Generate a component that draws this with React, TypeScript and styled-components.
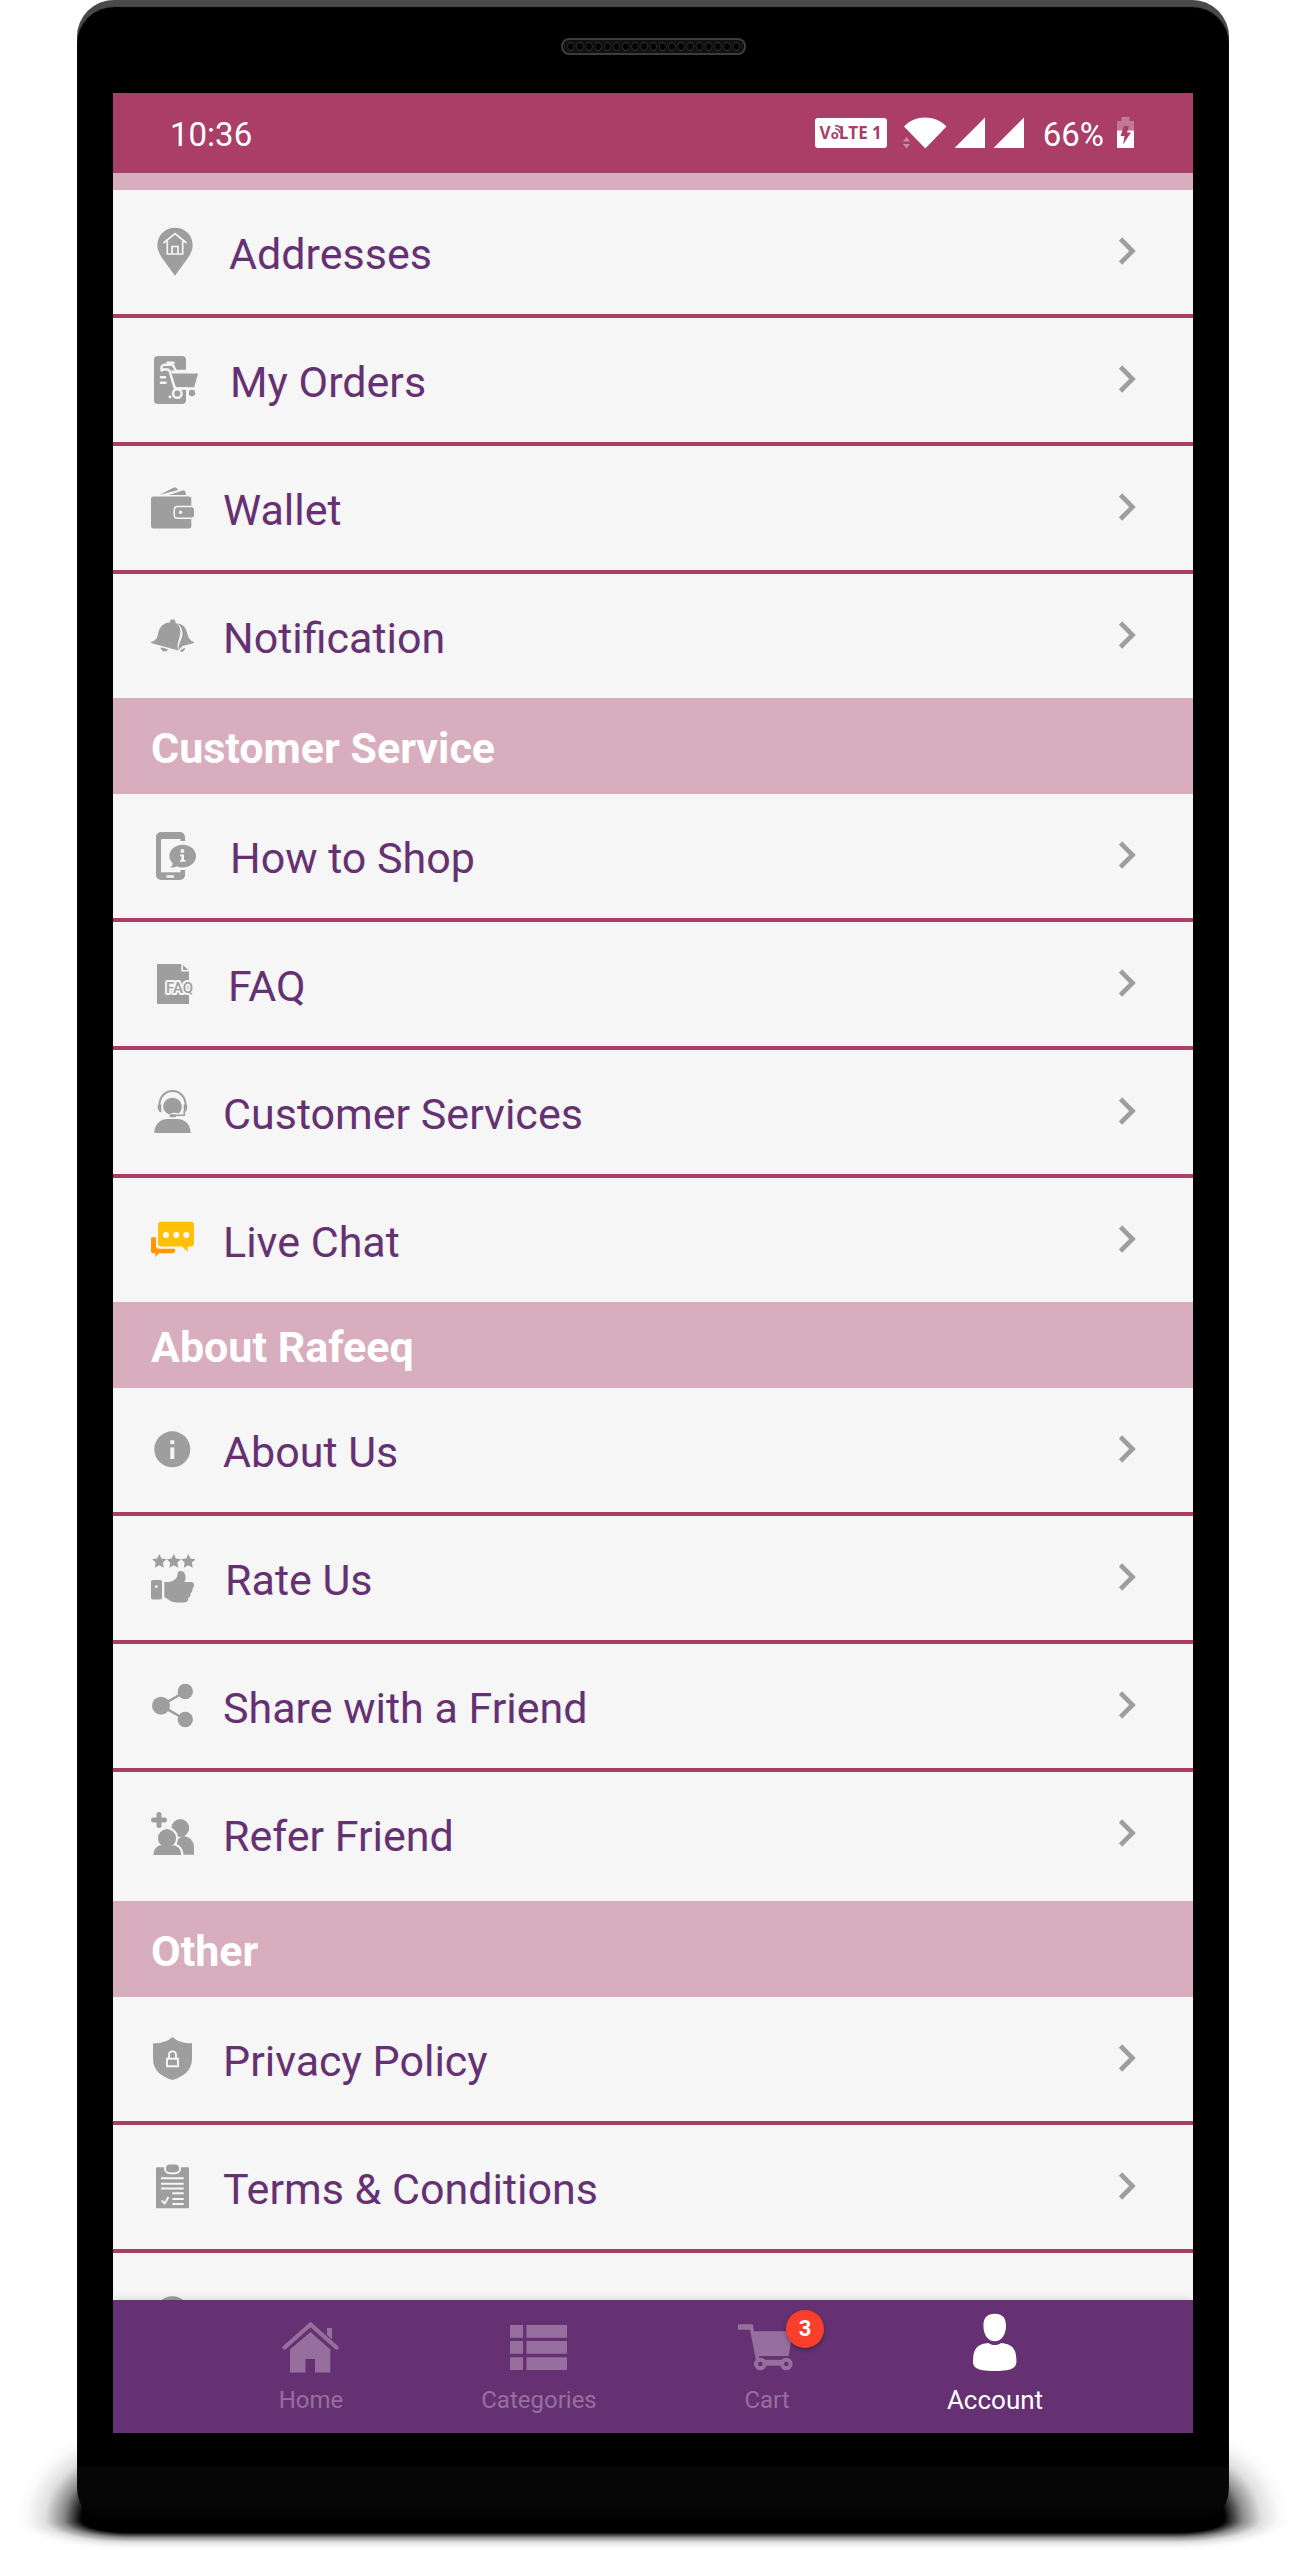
import React from "react";
import styled, { createGlobalStyle, css } from "styled-components";

const color = {
  berry: "#aa3e67",
  blush: "#d8adbd",
  surface: "#f6f6f6",
  purple: "#653172",
  icon: "#9e9e9e",
  muted: "#976f9f",
  alert: "#f93e2c",
};

const GlobalStyle = createGlobalStyle`
  *, *::before, *::after { box-sizing: border-box; }
  body {
    margin: 0;
    background: #fff;
    font-family: Roboto, "Noto Sans", sans-serif;
  }
`;

const Stage = styled.div`
  position: relative;
  height: 100vh;
  padding: 0 76px 25px 77px;
  overflow: hidden;
`;

const shade = "#000 42%, rgba(0, 0, 0, 0.45) 58%, rgba(0, 0, 0, 0.12) 74%, rgba(0, 0, 0, 0.02) 90%, transparent 100%";

const GroundShadow = styled.div`
  position: absolute;
  left: 15px;
  right: 14px;
  bottom: 0;
  height: 125px;
  background-repeat: no-repeat;
  background-image: radial-gradient(115px 95px at 100% 100%, ${shade}),
    radial-gradient(115px 95px at 0 100%, ${shade}),
    radial-gradient(115px 30px at 100% 0, ${shade}),
    radial-gradient(115px 30px at 0 0, ${shade}),
    linear-gradient(${shade});
  background-position: left top, right top, left bottom, right bottom, center bottom;
  background-size: 115px 95px, 115px 95px, 115px 30px, 115px 30px, calc(100% - 230px) 30px;
`;

const Phone = styled.div`
  position: relative;
  display: flex;
  flex-direction: column;
  height: 100%;
  padding: 0 36px;
  border-radius: 37px;
  background: linear-gradient(#000, #000) top / 100% calc(100% - 58px) no-repeat,
    linear-gradient(#070707, #060606 50%, #000) bottom / 100% 58px no-repeat;
  box-shadow: inset 0 7px 1px #4a4a4a;
`;

const TopBezel = styled.div`
  flex: none;
  display: flex;
  justify-content: center;
  height: 93px;
  padding-top: 38px;
`;

const Speaker = styled.div`
  width: 185px;
  height: 17px;
  padding: 0 3px;
  border: 2px solid #3c3c3c;
  border-radius: 8px;
  background-color: #111;
  background-image: radial-gradient(3px 4px at center, #000 80%, #3a3a3a 100%, transparent 120%);
  background-origin: content-box;
  background-size: 9px 13px;
  background-repeat: round no-repeat;
`;

const BottomBezel = styled.div`
  flex: none;
  height: 92px;
`;

const Screen = styled.div`
  flex: 1;
  min-height: 0;
  display: flex;
  flex-direction: column;
  background: ${color.surface};
`;

const StatusBar = styled.header`
  flex: none;
  display: flex;
  align-items: center;
  justify-content: space-between;
  height: 80px;
  padding: 0 59px 0 57px;
  background: ${color.berry};
  color: #fff;
`;

const StatusText = styled.span`
  padding-top: 4px;
  font-size: 33px;
  line-height: 40px;
`;

const StatusGroup = styled.div`
  display: flex;
  align-items: center;
  gap: 7px;

  svg {
    display: block;
    flex: none;
  }
`;

const Percent = styled(StatusText)`
  margin: 0 6px 0 11px;
`;

const NetworkBadge = styled.span`
  position: relative;
  display: flex;
  align-items: baseline;
  justify-content: center;
  width: 72px;
  height: 30px;
  margin-right: 9px;
  border-radius: 3px;
  background: #fff;
  color: ${color.berry};
  font: 700 17px/30px "Open Sans", sans-serif;
  white-space: pre;

  small {
    font-size: 13px;
  }

  svg {
    position: absolute;
    left: 20px;
    top: 7px;
  }
`;

const Content = styled.main`
  flex: 1;
  min-height: 0;
  overflow-y: auto;
  scrollbar-width: none;
`;

const Strip = styled.div`
  height: 17px;
  background: ${color.blush};
`;

const SectionTitle = styled.h2<{ $compact?: boolean }>`
  display: flex;
  align-items: center;
  height: ${(p) => (p.$compact ? 86 : 96)}px;
  margin: 0;
  padding: 3px 38px 0;
  background: ${color.blush};
  color: #fff;
  font-size: 43px;
  line-height: 50px;
  font-weight: 700;
`;

const List = styled.ul<{ $spaced?: boolean }>`
  margin: 0;
  padding: 0 0 ${(p) => (p.$spaced ? 5 : 0)}px;
  list-style: none;
`;

const Item = styled.li`
  & + & {
    border-top: 4px solid ${color.berry};
  }
`;

const RowLink = styled.a`
  display: flex;
  align-items: center;
  height: 124px;
  padding: 0 57px 0 38px;
  color: ${color.purple};
  text-decoration: none;

  svg {
    display: block;
    flex: none;
  }
`;

const RowLabel = styled.span`
  flex: 1;
  padding: 3px 0 0 29px;
  font-size: 43px;
  line-height: 50px;
`;

const TabBar = styled.nav`
  position: relative;
  flex: none;
  display: grid;
  grid-template-columns: repeat(4, 1fr);
  height: 133px;
  padding: 13px 84px 0;
  background: ${color.purple};
  box-shadow: 0 -1px 8px rgba(0, 0, 0, 0.12);
`;

const Tab = styled.a<{ $active?: boolean }>`
  display: flex;
  flex-direction: column;
  align-items: center;
  gap: 13px;
  color: ${color.muted};
  font-size: 24px;
  line-height: 28px;
  text-decoration: none;
  ${(p) =>
    p.$active &&
    css`
      color: #fff;
      font-size: 26px;
    `}
`;

const TabIcon = styled.span`
  position: relative;
  height: 60px;

  svg {
    display: block;
  }
`;

const Badge = styled.span`
  position: absolute;
  left: 48px;
  top: -3px;
  width: 38px;
  height: 38px;
  border-radius: 50%;
  background: ${color.alert};
  box-shadow: 0 2px 4px rgba(0, 0, 0, 0.35);
  color: #fff;
  font-size: 22px;
  line-height: 38px;
  font-weight: 700;
  text-align: center;
`;

const g = color.icon;
const w = color.surface;

const Glyph = ({ width = 43, children }: { width?: number; children: React.ReactNode }) => (
  <svg width={width} height="64" viewBox={`0 0 ${width} 64`} fill={g} aria-hidden="true">
    {children}
  </svg>
);

const AddressIcon = () => (
  <Glyph width={49}>
    <path d="M24 7.700C14 7.700 6.400 15.300 6.400 25c0 4.500 1.600 8 4 12L24 55.700 37.600 37c2.400-4 4-7.500 4-12C41.600 15.300 34 7.700 24 7.700z" />
    <path
      d="M12.500 23 24 13.500 35.500 23M16.300 21v13h15.400V21M21 34v-7.500h6V34"
      fill="none"
      stroke={w}
      strokeWidth="1.700"
    />
  </Glyph>
);

const OrdersIcon = () => (
  <Glyph width={50}>
    <rect x="3" y="8" width="32" height="48" rx="4" />
    <path d="M20 22.500h17v19H25z" fill={w} />
    <path d="M20.500 25.500H47l-3.700 13.800H25z" />
    <path d="M27 41.700h8v6h-8z" />
    <path
      d="M10.700 22.500c-1-3 0-5.500 3-5.800h7c3 0 2 6.300 5.500 6.300H35M10.500 21.500h6c1.500 0 2 1 2.400 2.500L23 38.500c.4 1.500 1 2 2.500 2H36"
      fill="none"
      stroke={w}
      strokeWidth="2.400"
      strokeLinecap="round"
    />
    <path d="M16.500 14.800h6M10 29.300h4M10 34.700h4.500" stroke={w} strokeWidth="2.600" strokeLinecap="round" />
    <circle cx="26.300" cy="45.500" r="4.300" stroke={w} strokeWidth="2.400" />
    <circle cx="19" cy="49" r="1.400" fill={w} />
    <circle cx="41" cy="45" r="3.200" />
  </Glyph>
);

const WalletIcon = () => (
  <Glyph>
    <path d="m8.300 19 14-7.300c2-1 3-.7 4.700 2.300z" />
    <path d="m18 19 13.500-4.400c2.500-.7 3.300.6 3.500 4.400z" />
    <rect y="20.500" width="40.300" height="32" rx="2.500" />
    <path d="M44 29.700H26.500a4 4 0 0 0-4 4v5.200a4 4 0 0 0 4 4H44z" fill={w} />
    <rect x="24" y="31.200" width="19" height="10.300" rx="2.500" />
    <circle cx="29.500" cy="36.300" r="1.700" fill={w} />
  </Glyph>
);

const BellIcon = () => (
  <Glyph>
    <path d="M18.800 18.500c.2-4.200 5.600-4.200 5.800.2 3.500 1.800 5 5.300 4.700 10.300-.3 5-3 9-2.800 13 0 1.500.4 3 1 4.500L0 39v-1c4.800-1.200 6.200-4 7-8 1.200-6.500 4.500-11 11.800-11.500z" />
    <path d="M26 19.500c5.500.2 8.500 3.500 10 9 1.200 5 3 8.500 7 9.500v1l-11.500 3-3.700 4c-1-5.500 2.700-9.500 3.500-14.500.6-5-.8-9.500-5.300-12z" />
    <path d="M9.500 43.500c2.500 0 5 .8 7.500 2-1.500 3-6.700 2.500-7.500-2zM29 46.500l5-3c.2 2-1.500 4.500-3.500 4.500z" />
  </Glyph>
);

const HowToIcon = () => (
  <Glyph width={50}>
    <rect x="5" y="8" width="29" height="48" rx="5" />
    <path d="M10 15h19.500v33.300H10z" fill={w} />
    <path d="M29 17h6v29h-6z" fill={w} />
    <path d="M16.300 52.500H22" stroke={w} strokeWidth="2.400" strokeLinecap="round" />
    <path d="M31.700 20.700c7.500 0 13.300 5 13.300 11.400s-5.800 11.400-13.300 11.400c-2.300 0-4.300-.5-6-1.300-2 1.300-4 1.500-6.400 1 1.300-1 2.400-2.300 2.600-3.700-2.200-2-3.500-4.500-3.500-7.400 0-6.400 5.800-11.400 13.300-11.400z" />
    <circle cx="31.400" cy="27" r="1.900" fill={w} />
    <path d="M29 30.500h4V36h1.500v1.800H29V36h1.300v-3.700H29z" fill={w} />
  </Glyph>
);

const FaqIcon = () => (
  <Glyph width={48}>
    <path d="M7 12h23.300v7.500H38V52H7a1 1 0 0 1-1-1V13a1 1 0 0 1 1-1z" />
    <path d="M32 13v5h5.300z" />
    <text
      x="15"
      y="41"
      fontFamily="Roboto, sans-serif"
      fontSize="15"
      fontWeight="500"
      stroke={w}
      strokeWidth="4"
      strokeLinejoin="round"
      paintOrder="stroke"
    >
      FAQ
    </text>
  </Glyph>
);

const SupportIcon = () => (
  <Glyph>
    <path d="M8.300 26c0-20 26.400-20 26.400 0" fill="none" stroke={g} strokeWidth="2" />
    <path d="M7.300 24.500h3v8c-4-.5-4-7.500-3-8zM35.700 24.500h-3v8c4-.5 4-7.500 3-8z" />
    <path d="M33.300 31v4.300H20" fill="none" stroke={g} strokeWidth="1.600" />
    <path d="M21.500 17.800c5 0 9.300 3.700 9.300 8.700 0 3-1.300 5.500-3.300 7-2-1-7-1-9 1-3.500-1.300-6.300-4-6.300-8 0-5 4.300-8.700 9.300-8.700z" />
    <rect x="18.500" y="34.500" width="6.500" height="2.700" rx="1.300" />
    <path d="M3.300 53c0-8 5.500-14 13.500-14h9.400c8 0 13.500 6 13.500 14z" />
  </Glyph>
);

const ChatIcon = () => (
  <Glyph>
    <path
      d="M0 30.700c0-1 .5-1.400 1.500-1.400H5v8.500c0 2 1 3 3 3h16v1.700c0 1.700-1 2.700-2.700 2.700H8L4.300 49v-3.800H2c-1.300 0-2-.7-2-2z"
      fill="#ff9800"
    />
    <path
      d="M10 13.800h30c2 0 3 1 3 3v18.800c0 2-1 3-3 3h-3.300v5.200L31 38.600H10c-2 0-3-1-3-3V16.800c0-2 1-3 3-3z"
      fill="#ffc107"
    />
    <g fill={w}>
      <circle cx="15" cy="27" r="3" />
      <circle cx="25.300" cy="27" r="3" />
      <circle cx="35.300" cy="27" r="3" />
    </g>
  </Glyph>
);

const InfoIcon = () => (
  <Glyph>
    <circle cx="21.300" cy="31.300" r="18" />
    <path d="M19.300 22.300h4V26h-4zM19.300 29.500h4V41h-4z" fill={w} />
  </Glyph>
);

const star = "M0-7.600 2.100-2.900 7.200-2.300 3.600 1.100 4.500 6.200 0 3.700-4.500 6.200-3.600 1.100-7.200-2.300-2.100-2.900z";

const RateIcon = () => (
  <Glyph width={45}>
    <path d={star} transform="translate(8.300 15.500)" />
    <path d={star} transform="translate(22.800 15.500)" />
    <path d={star} transform="translate(37.300 15.500)" />
    <path d="M2 34h7c1.300 0 2 .7 2 2v15.500c0 1.300-.7 2-2 2H2c-1.300 0-2-.7-2-2V36c0-1.300.7-2 2-2z" />
    <circle cx="5.300" cy="40.700" r="1.400" fill={w} />
    <path d="M13.300 36H18c6-1.500 8.500-4 8.500-8 0-2.500 1.500-3.300 3.500-3 5 .5 5.500 7 3.500 11H40c3.800 0 4 5 1.500 6.500.3 2.500-.6 4-2 4.700.5 2.500-.8 4-2.300 4.800.3 3-1.500 4.500-4.200 4.500h-7.500c-5.500 0-8.500-3.500-12.200-5.500z" />
  </Glyph>
);

const ShareIcon = () => (
  <Glyph>
    <path d="M34.300 17.500 10 31.700l24.300 13.800" fill="none" stroke={g} strokeWidth="2.500" />
    <circle cx="10" cy="31.700" r="9" />
    <circle cx="34.300" cy="17.500" r="7.700" />
    <circle cx="34.300" cy="45.500" r="7.700" />
  </Glyph>
);

const ReferIcon = () => (
  <Glyph>
    <path d="M8 12.500v11M2.500 18h11" stroke={g} strokeWidth="5" strokeLinecap="round" />
    <circle cx="29.300" cy="26" r="8.900" />
    <path d="M18 52.800V42l14-8c6 0 11 5 11 11v7.800z" />
    <g stroke={w} strokeWidth="2.200">
      <circle cx="16" cy="36.200" r="10" />
      <path d="M1 54c0-7.500 4-12 10-12 3 1.500 7 1.500 10 0 6.500.5 10.500 5 10.500 12z" />
    </g>
    <circle cx="16" cy="36.200" r="8.900" />
    <path d="M0 53h33v3H0z" fill={w} />
  </Glyph>
);

const ShieldIcon = () => (
  <Glyph>
    <path d="M21.500 10c5 4.500 11 6.300 19.500 6.300V32c0 11.500-9 18-19.500 21C11 50 2 43.500 2 32V16.300c8.500 0 14.500-1.800 19.500-6.300z" />
    <path d="M16 31.800h11v7.400H16zM18 31.500V28c0-4.800 7-4.800 7 0v3.500" fill="none" stroke={w} strokeWidth="1.900" />
  </Glyph>
);

const TermsIcon = () => (
  <Glyph>
    <rect x="5" y="12.300" width="33" height="41" rx="1" />
    <rect x="14" y="8.500" width="15" height="9.700" rx="4.800" stroke={w} strokeWidth="2" />
    <path
      d="M10 23.300h22.700M10 28.700h22.700M10 33.500h22.700M21.300 38.300h11.400M21.300 44h11.400M21.300 49h11.400M10.700 45.500l3 3 3.800-6.500"
      fill="none"
      stroke={w}
      strokeWidth="2"
    />
  </Glyph>
);

const Chevron = () => (
  <svg width="18" height="30" viewBox="0 0 18 30" fill="none" aria-hidden="true">
    <path d="M2.500 2 14.500 14 2.500 26" stroke={g} strokeWidth="4.600" />
  </svg>
);

const TabGlyph = ({ children }: { children: React.ReactNode }) => (
  <svg width="58" height="60" viewBox="0 0 58 60" fill="currentColor" aria-hidden="true">
    {children}
  </svg>
);

const HomeTab = () => (
  <TabGlyph>
    <path d="m2.500 34.500 26-23 26 23" fill="none" stroke="currentColor" strokeWidth="4.200" strokeLinecap="round" />
    <path d="M45 15h5v11.500L45 22z" />
    <path d="m28.500 19 19.800 17.500V59.500H33V46h-9.500v13.500H8V36.500z" />
  </TabGlyph>
);

const CategoriesTab = () => (
  <TabGlyph>
    <path d="M0 12h13v12.700H0zM16.500 12H57v12.700H16.500zM0 28h13v12.700H0zM16.500 28H57v12.700H16.500zM0 44.300h13V57H0zM16.500 44.300H57V57H16.500z" />
  </TabGlyph>
);

const CartTab = () => (
  <TabGlyph>
    <path d="M0 11.300h13.500c1 0 1.500.5 1.700 1.500l.8 5.500h39l-4.500 24.700H21l.5 2.500L18 47l-6-30.300H0z" />
    <path d="M22 46.800h26v5.900H22z" />
    <g fill={color.purple} stroke="currentColor" strokeWidth="4">
      <circle cx="22.300" cy="51" r="4.300" />
      <circle cx="48.300" cy="51" r="4.300" />
    </g>
  </TabGlyph>
);

const AccountTab = () => (
  <TabGlyph>
    <path d="M28.700.7c7.500 0 11.300 3.800 11.300 12 0 9-4.800 15.600-11.300 15.600S17.400 21.700 17.400 12.700c0-8.200 3.800-12 11.300-12z" />
    <path d="M22.500 30c3.500 2.800 9 2.800 12.500 0 10 .7 15 5 15.300 15.500.9 8-1.300 12.500-21.600 12.500S6.200 53.500 7.200 45.500C7.500 35 12.500 30.700 22.500 30z" />
  </TabGlyph>
);

const Signal = () => (
  <svg width="32" height="32" viewBox="0 0 32 32" fill="#fff" aria-hidden="true">
    <path d="M31 .5V31H.5z" />
  </svg>
);

type Entry = { label: string; icon: React.ReactNode; iconOnly?: boolean };

const accountItems: Entry[] = [
  { label: "Addresses", icon: <AddressIcon /> },
  { label: "My Orders", icon: <OrdersIcon /> },
  { label: "Wallet", icon: <WalletIcon /> },
  { label: "Notification", icon: <BellIcon /> },
];

const serviceItems: Entry[] = [
  { label: "How to Shop", icon: <HowToIcon /> },
  { label: "FAQ", icon: <FaqIcon /> },
  { label: "Customer Services", icon: <SupportIcon /> },
  { label: "Live Chat", icon: <ChatIcon /> },
];

const aboutItems: Entry[] = [
  { label: "About Us", icon: <InfoIcon /> },
  { label: "Rate Us", icon: <RateIcon /> },
  { label: "Share with a Friend", icon: <ShareIcon /> },
  { label: "Refer Friend", icon: <ReferIcon /> },
];

const otherItems: Entry[] = [
  { label: "Privacy Policy", icon: <ShieldIcon /> },
  { label: "Terms & Conditions", icon: <TermsIcon /> },
  { label: "Update", icon: <InfoIcon />, iconOnly: true },
];

const Menu = ({ items, spaced }: { items: Entry[]; spaced?: boolean }) => (
  <List $spaced={spaced}>
    {items.map(({ label, icon, iconOnly }) => (
      <Item key={label}>
        <RowLink href="#" aria-label={label}>
          {icon}
          <RowLabel>{iconOnly ? null : label}</RowLabel>
          <Chevron />
        </RowLink>
      </Item>
    ))}
  </List>
);

export default function App() {
  return (
    <>
      <GlobalStyle />
      <Stage>
        <GroundShadow />
        <Phone>
          <TopBezel>
            <Speaker />
          </TopBezel>
          <Screen>
            <StatusBar>
              <StatusText>10:36</StatusText>
              <StatusGroup>
                <NetworkBadge>
                  V<small>o</small>LTE 1
                  <svg width="9" height="9" viewBox="0 0 9 9" fill="none" stroke={color.berry} strokeWidth="1.400" aria-hidden="true">
                    <path d="M0 1c4-1 8 3 7.500 7M0 4c2.500-.5 5 1.500 4.500 4" />
                  </svg>
                </NetworkBadge>
                <svg width="44" height="32" viewBox="0 0 44 32" fill="#fff" aria-hidden="true">
                  <path d="M1 9.500C12-2.500 32-2.500 43.500 9.500L22.300 31.500z" />
                  <path d="m3.500 20 3.500 4.500H0zM3.500 31.500 7 27H0z" opacity="0.4" />
                </svg>
                <Signal />
                <Signal />
                <Percent>66%</Percent>
                <svg width="17" height="32" viewBox="0 0 17 32" fill="#fff" aria-hidden="true">
                  <path d="M4.500 0h8v4H16c.7 0 1 .3 1 1v8.500H0V5c0-.7.300-1 1-1h3.500z" opacity="0.300" />
                  <path d="M0 13.500h17V30c0 .7-.300 1-1 1H1c-.7 0-1-.300-1-1z" />
                  <path d="M7 9h5l-2 6.500h4L6 27.500l1.500-8.500H3.500z" fill={color.berry} />
                </svg>
              </StatusGroup>
            </StatusBar>
            <Content>
              <Strip />
              <Menu items={accountItems} />
              <SectionTitle>Customer Service</SectionTitle>
              <Menu items={serviceItems} />
              <SectionTitle $compact>About Rafeeq</SectionTitle>
              <Menu items={aboutItems} spaced />
              <SectionTitle>Other</SectionTitle>
              <Menu items={otherItems} />
            </Content>
            <TabBar>
              <Tab href="#">
                <TabIcon>
                  <HomeTab />
                </TabIcon>
                Home
              </Tab>
              <Tab href="#">
                <TabIcon>
                  <CategoriesTab />
                </TabIcon>
                Categories
              </Tab>
              <Tab href="#">
                <TabIcon>
                  <CartTab />
                  <Badge>3</Badge>
                </TabIcon>
                Cart
              </Tab>
              <Tab href="#" $active aria-current="page">
                <TabIcon>
                  <AccountTab />
                </TabIcon>
                Account
              </Tab>
            </TabBar>
          </Screen>
          <BottomBezel />
        </Phone>
      </Stage>
    </>
  );
}
